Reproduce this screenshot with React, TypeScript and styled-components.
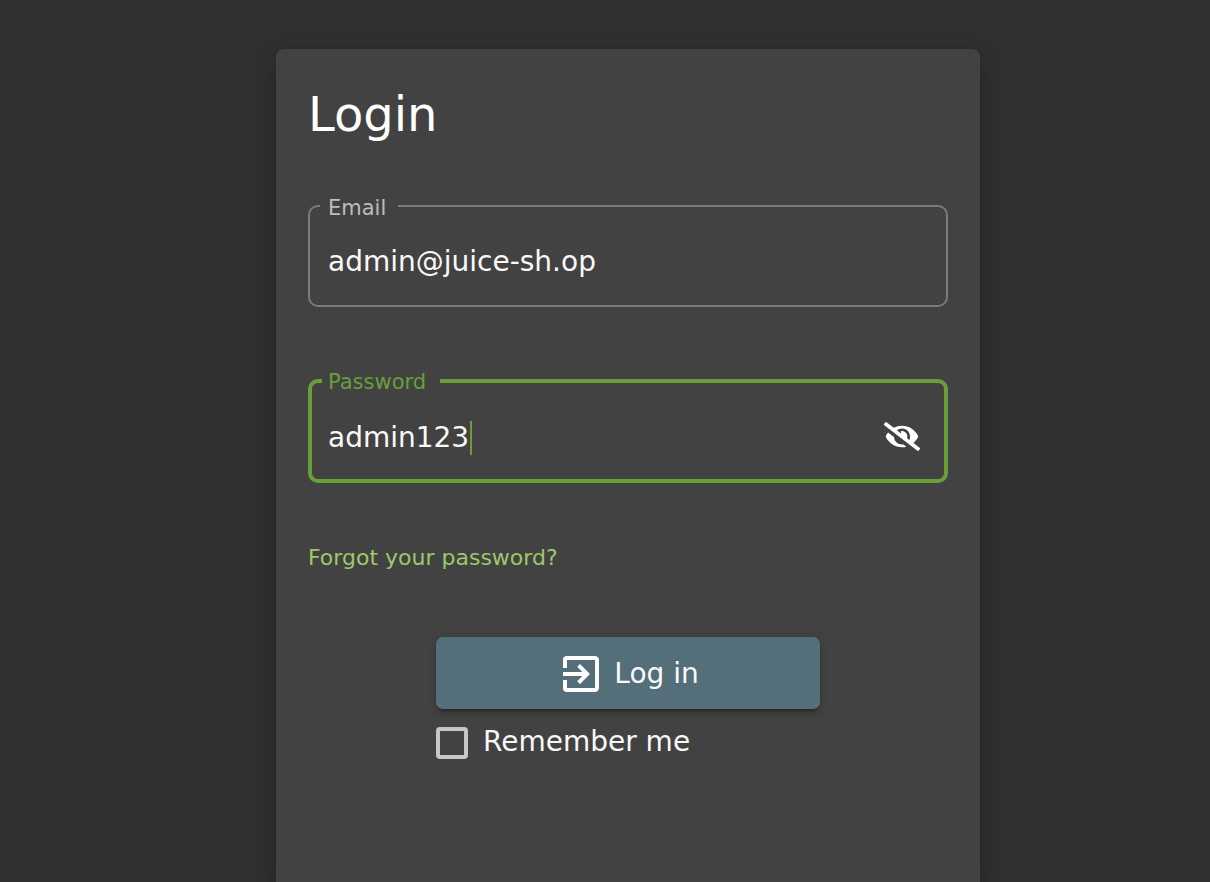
import React, { useState } from "react";
import styled, { createGlobalStyle, css } from "styled-components";
import { MdExitToApp } from "react-icons/md";
import { FaEyeSlash, FaEye } from "react-icons/fa";

const GlobalStyle = createGlobalStyle`
  *, *::before, *::after { box-sizing: border-box; }
  body {
    margin: 0;
    background: #303030;
    color: #fff;
    font-family: "DejaVu Sans", sans-serif;
    font-size: 28px;
    line-height: 36px;
  }
`;

const Page = styled.main`
  display: flex;
  justify-content: center;
  min-height: 100vh;
  padding: 49px 0 0 46px;
  overflow: hidden;
`;

const Card = styled.form`
  display: flex;
  flex-direction: column;
  width: 100%;
  max-width: 704px;
  padding: 33px 32px 64px;
  border-radius: 8px 8px 0 0;
  background: #424242;
  box-shadow: 0 10px 10px -6px rgba(0, 0, 0, 0.2),
    0 16px 20px 2px rgba(0, 0, 0, 0.1), 0 6px 28px 4px rgba(0, 0, 0, 0.08);
`;

const Title = styled.h1`
  margin: 0;
  font-size: 48px;
  font-weight: 400;
  line-height: 64px;
`;

const Fields = styled.div`
  display: flex;
  flex-direction: column;
  gap: 60px;
  margin-top: 46px;
`;

const Outline = styled.fieldset<{ $active?: boolean }>`
  min-width: 0;
  margin: 0;
  padding: 0 10px 1px;
  border: 2px solid #7b7b7b;
  border-radius: 10px;
  ${(p) =>
    p.$active &&
    css`
      padding-bottom: 0;
      border: 4px solid #689f38;
    `}
`;

const Legend = styled.legend<{ $active?: boolean }>`
  padding: ${(p) => (p.$active ? "3px 14px 1px 6px" : "4px 12px 0 8px")};
  color: ${(p) => (p.$active ? "#689f38" : "#bdbdbd")};
  font-size: 21px;
  line-height: 24px;
`;

const FieldBody = styled.div<{ $active?: boolean }>`
  display: flex;
  align-items: center;
  height: 84px;
  padding: ${(p) => (p.$active ? "2px 14px 0 6px" : "0 8px")};
`;

const Input = styled.input<{ $fit?: boolean }>`
  flex: ${(p) => (p.$fit ? "0 1 auto" : "1 1 0")};
  field-sizing: ${(p) => (p.$fit ? "content" : "fixed")};
  min-width: 0;
  height: 36px;
  padding: 0;
  border: 0;
  outline: 0;
  background: transparent;
  color: #f8f8f8;
  caret-color: transparent;
  font: inherit;
`;

const Caret = styled.span`
  width: 2px;
  height: 34px;
  margin-left: 1px;
  background: #689f38;
`;

const IconButton = styled.button`
  display: flex;
  margin-left: auto;
  padding: 0 0 4px;
  border: 0;
  background: transparent;
  color: #fff;
  cursor: pointer;

  svg {
    width: 36px;
    height: 29px;
  }
`;

const ForgotLink = styled.a`
  align-self: flex-start;
  margin-top: 61px;
  color: #9cc869;
  font-size: 22px;
  line-height: 28px;
  text-decoration: none;
`;

const Actions = styled.div`
  display: flex;
  flex-direction: column;
  gap: 15px;
  width: 60%;
  margin: 65px auto 0;
`;

const SubmitButton = styled.button`
  display: flex;
  align-items: center;
  justify-content: center;
  gap: 9px;
  height: 72px;
  padding: 2px 0 0;
  border: 0;
  border-radius: 7px;
  background: #546e7a;
  color: #f8f8f8;
  font: inherit;
  box-shadow: 0 6px 2px -4px rgba(0, 0, 0, 0.2),
    0 4px 4px rgba(0, 0, 0, 0.14), 0 2px 10px rgba(0, 0, 0, 0.12);
  cursor: pointer;

  svg {
    width: 48px;
    height: 48px;
    color: #fff;
  }
`;

const Remember = styled.label`
  display: flex;
  align-items: center;
  gap: 15px;
  color: #f8f8f8;
  cursor: pointer;
`;

const RememberText = styled.span`
  padding-bottom: 2px;
`;

const Checkbox = styled.input`
  appearance: none;
  width: 32px;
  height: 32px;
  margin: 0;
  border: 4px solid #c6c6c6;
  border-radius: 4px;

  &:checked {
    border-color: #689f38;
    background: #689f38;
  }
`;

export default function App() {
  const [email, setEmail] = useState("admin@juice-sh.op");
  const [password, setPassword] = useState("admin123");
  const [visible, setVisible] = useState(true);
  const [remember, setRemember] = useState(false);

  return (
    <>
      <GlobalStyle />
      <Page>
        <Card onSubmit={(e) => e.preventDefault()}>
          <Title>Login</Title>
          <Fields>
            <Outline>
              <Legend>
                <label htmlFor="email">Email</label>
              </Legend>
              <FieldBody>
                <Input
                  id="email"
                  value={email}
                  onChange={(e) => setEmail(e.target.value)}
                />
              </FieldBody>
            </Outline>
            <Outline $active>
              <Legend $active>
                <label htmlFor="password">Password</label>
              </Legend>
              <FieldBody $active>
                <Input
                  id="password"
                  $fit
                  type={visible ? "text" : "password"}
                  value={password}
                  onChange={(e) => setPassword(e.target.value)}
                />
                <Caret />
                <IconButton
                  type="button"
                  aria-label="Toggle password visibility"
                  onClick={() => setVisible(!visible)}
                >
                  {visible ? <FaEyeSlash /> : <FaEye />}
                </IconButton>
              </FieldBody>
            </Outline>
          </Fields>
          <ForgotLink href="#forgot-password">Forgot your password?</ForgotLink>
          <Actions>
            <SubmitButton type="submit">
              <MdExitToApp />
              Log in
            </SubmitButton>
            <Remember>
              <Checkbox
                type="checkbox"
                checked={remember}
                onChange={(e) => setRemember(e.target.checked)}
              />
              <RememberText>Remember me</RememberText>
            </Remember>
          </Actions>
        </Card>
      </Page>
    </>
  );
}
